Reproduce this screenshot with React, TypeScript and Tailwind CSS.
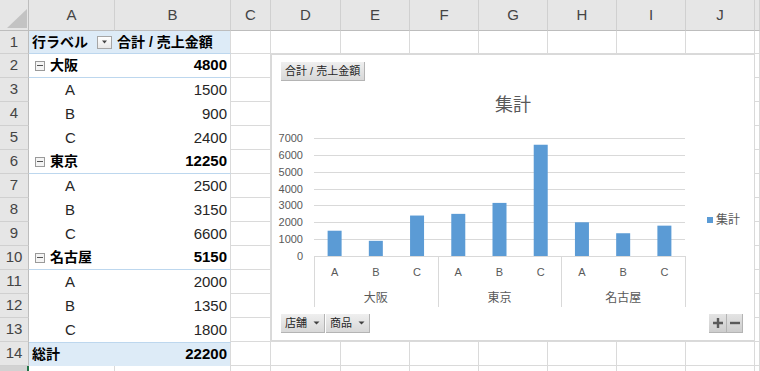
import React from "react";

const COLS = ["A", "B", "C", "D", "E", "F", "G", "H", "I", "J", ""];

type PivotRow =
  | { kind: "head" }
  | { kind: "group"; label: string; value: string }
  | { kind: "item"; label: string; value: string }
  | { kind: "total"; label: string; value: string }
  | { kind: "blank" };

const ROWS: PivotRow[] = [
  { kind: "head" },
  { kind: "group", label: "大阪", value: "4800" },
  { kind: "item", label: "A", value: "1500" },
  { kind: "item", label: "B", value: "900" },
  { kind: "item", label: "C", value: "2400" },
  { kind: "group", label: "東京", value: "12250" },
  { kind: "item", label: "A", value: "2500" },
  { kind: "item", label: "B", value: "3150" },
  { kind: "item", label: "C", value: "6600" },
  { kind: "group", label: "名古屋", value: "5150" },
  { kind: "item", label: "A", value: "2000" },
  { kind: "item", label: "B", value: "1350" },
  { kind: "item", label: "C", value: "1800" },
  { kind: "total", label: "総計", value: "22200" },
  { kind: "blank" },
];

const SALES = [
  { group: "大阪", items: [1500, 900, 2400] },
  { group: "東京", items: [2500, 3150, 6600] },
  { group: "名古屋", items: [2000, 1350, 1800] },
];

function MinusBox() {
  return (
    <span className="flex h-[10px] w-[10px] items-center justify-center border border-[#9a9a9a] bg-[#f4f4f4]">
      <span className="h-[1px] w-[6px] bg-[#555]" />
    </span>
  );
}

function FilterBox() {
  return (
    <span className="flex h-[13px] w-[15px] items-center justify-center border border-[#a6a6a6] bg-linear-to-b from-white to-[#e8e8e8]">
      <svg width="7" height="4" viewBox="0 0 7 4">
        <path d="M1 0.5h5L3.5 3.5z" fill="#444" />
      </svg>
    </span>
  );
}

function PivotCells({ row }: { row: PivotRow }) {
  const blue = "bg-[#ddebf7]";
  if (row.kind === "head") {
    return (
      <>
        <div className={`${blue} flex items-center border-b border-[#bdd7ee] pl-[3px] pr-[3px] text-[14px] font-bold text-black`}>
          <span>行ラベル</span>
          <span className="ml-auto">
            <FilterBox />
          </span>
        </div>
        <div className={`${blue} flex items-center border-r border-b border-[#bdd7ee] border-r-[#dadada] pl-[2px] text-[14px] font-bold text-black`}>
          合計 / 売上金額
        </div>
      </>
    );
  }
  if (row.kind === "group") {
    return (
      <>
        <div className="flex items-center gap-[5px] border-b border-[#bdd7ee] pl-[6px] text-[14px] font-bold text-black">
          <MinusBox />
          <span>{row.label}</span>
        </div>
        <div className="flex items-center justify-end border-r border-b border-[#bdd7ee] border-r-[#dadada] pr-[3px] text-[15px] font-bold text-black">
          {row.value}
        </div>
      </>
    );
  }
  if (row.kind === "item") {
    return (
      <>
        <div className="flex items-center pl-[36px] text-[15px] text-[#262626]">{row.label}</div>
        <div className="flex items-center justify-end border-r border-[#dadada] pr-[3px] text-[15px] text-[#262626]">
          {row.value}
        </div>
      </>
    );
  }
  if (row.kind === "total") {
    return (
      <>
        <div className={`${blue} flex items-center border-t border-[#bdd7ee] pl-[3px] text-[14px] font-bold text-black`}>
          {row.label}
        </div>
        <div className={`${blue} flex items-center justify-end border-t border-r border-[#bdd7ee] border-r-[#dadada] pr-[3px] text-[15px] font-bold text-black`}>
          {row.value}
        </div>
      </>
    );
  }
  return (
    <>
      <div className="border-r border-b border-[#dadada]" />
      <div className="border-r border-b border-[#dadada]" />
    </>
  );
}

function Sheet() {
  return (
    <div className="grid grid-cols-[29px_86px_116px_40px_70px_69px_69px_69px_69px_69px_69px_5px] grid-rows-[31px_23px_repeat(14,24px)]">
      {/* corner */}
      <div className="relative border-r border-b border-[#bdbdbd] bg-[#e6e6e6]">
        <svg className="absolute right-[1px] bottom-[2px]" width="20" height="19" viewBox="0 0 20 19">
          <path d="M20 0V19H0z" fill="#c3c3c3" />
        </svg>
      </div>
      {COLS.map((c, i) => (
        <div
          key={"h" + i}
          className="flex items-center justify-center border-r border-b border-[#d0d0d0] border-b-[#bdbdbd] bg-[#e6e6e6] text-[15px] text-[#444]"
        >
          {c}
        </div>
      ))}

      {ROWS.map((row, r) => (
        <React.Fragment key={"r" + r}>
          <div
            className={`flex items-center justify-center border-r border-b border-[#d0d0d0] text-[15px] text-[#444] ${
              r === 14 ? "border-r-2 border-r-[#217346] bg-[#d2d2d2]" : "border-r-[#bdbdbd] bg-[#e6e6e6]"
            }`}
          >
            {r < 14 ? r + 1 : null}
          </div>
          <PivotCells row={row} />
          {COLS.slice(2).map((_, i) => (
            <div key={"c" + i} className="border-r border-b border-[#dadada]" />
          ))}
        </React.Fragment>
      ))}
    </div>
  );
}

function FieldButton({ children, arrow, className }: { children: React.ReactNode; arrow?: boolean; className?: string }) {
  return (
    <div
      className={`flex h-[19px] items-center border-r border-b border-[#b4b4b4] bg-linear-to-b from-[#efefef] to-[#d8d8d8] px-[4px] text-[11px] whitespace-nowrap text-[#262626] ${className ?? ""}`}
    >
      <span>{children}</span>
      {arrow && (
        <svg width="7" height="4" viewBox="0 0 7 4" className="ml-auto">
          <path d="M0.5 0.5h6L3.5 3.5z" fill="#404040" />
        </svg>
      )}
    </div>
  );
}

function PlotArea() {
  const base = 131;
  const k = 0.016857;
  const left = 42;
  const right = 413;
  const slot = (right - left) / 9;
  const yOf = (v: number) => Math.round(base - v * k);
  const ticks = [0, 1000, 2000, 3000, 4000, 5000, 6000, 7000];
  const bars = SALES.flatMap((g) => g.items);
  const products = ["A", "B", "C"];

  return (
    <svg width="420" height="185" viewBox="0 0 420 185" fontFamily="'Liberation Sans','Noto Sans CJK JP',sans-serif">
      {ticks.map((t) => (
        <g key={t}>
          <line x1={left} x2={right} y1={yOf(t) + 0.5} y2={yOf(t) + 0.5} stroke="#d9d9d9" strokeWidth="1" />
          <text x="31" y={yOf(t) + 4} textAnchor="end" fontSize="11" fill="#595959">
            {t}
          </text>
        </g>
      ))}
      {bars.map((v, i) => {
        const c = left + slot * (i + 0.5);
        const h = v * k;
        return <rect key={i} x={c - 7} y={base - h} width="14" height={h} fill="#5b9bd5" />;
      })}
      {[0, 1, 2, 3].map((i) => {
        const x = Math.round(left + slot * 3 * i) + 0.5;
        return <line key={i} x1={x} x2={x} y1={base} y2={182} stroke="#d9d9d9" strokeWidth="1" />;
      })}
      {bars.map((_, i) => (
        <text key={"p" + i} x={left + slot * (i + 0.5)} y="151" textAnchor="middle" fontSize="11" fill="#595959">
          {products[i % 3]}
        </text>
      ))}
      {SALES.map((g, i) => (
        <text key={g.group} x={left + slot * (3 * i + 1.5)} y="177" textAnchor="middle" fontSize="12" fill="#595959">
          {g.group}
        </text>
      ))}
    </svg>
  );
}

function Chart() {
  return (
    <div className="absolute top-[54px] left-[271px] flex h-[287px] w-[484px] flex-col border border-[#d9d9d9] bg-white">
      <div className="pt-[7px] pl-[9px]">
        <FieldButton className="w-[84px] px-[3px]">合計 / 売上金額</FieldButton>
      </div>
      <div className="mt-[14px] h-[20px] text-center text-[18px] leading-[20px] text-[#595959]">集計</div>
      <div className="mt-[10px] flex">
        <PlotArea />
        <div className="mt-[87px] ml-[15px] flex h-[16px] items-center gap-[3px]">
          <span className="h-[6px] w-[6px] bg-[#5b9bd5]" />
          <span className="text-[12px] leading-[16px] text-[#595959]">集計</span>
        </div>
      </div>
      <div className="mt-[4px] flex items-start justify-between pr-[11px] pl-[9px]">
        <div className="flex gap-[1px]">
          <FieldButton arrow className="w-[44px]">店舗</FieldButton>
          <FieldButton arrow className="w-[44px]">商品</FieldButton>
        </div>
        <div className="flex">
          <div className="flex h-[19px] w-[18px] items-center justify-center border-r border-b border-[#b4b4b4] bg-linear-to-b from-[#e4e4e4] to-[#cdcdcd]">
            <svg width="12" height="12" viewBox="0 0 12 12">
              <path d="M6 1v10M1 6h10" stroke="#5a5a5a" strokeWidth="2.4" />
            </svg>
          </div>
          <div className="flex h-[19px] w-[16px] items-center justify-center border-r border-b border-[#b4b4b4] bg-linear-to-b from-[#e4e4e4] to-[#cdcdcd]">
            <svg width="12" height="12" viewBox="0 0 12 12">
              <path d="M1 6h10" stroke="#5a5a5a" strokeWidth="2.4" />
            </svg>
          </div>
        </div>
      </div>
    </div>
  );
}

export default function App() {
  return (
    <div className="relative h-[371px] w-[760px] overflow-hidden bg-white font-['Liberation_Sans','Noto_Sans_CJK_JP',sans-serif] text-[#222]">
      <Sheet />
      <Chart />
    </div>
  );
}
